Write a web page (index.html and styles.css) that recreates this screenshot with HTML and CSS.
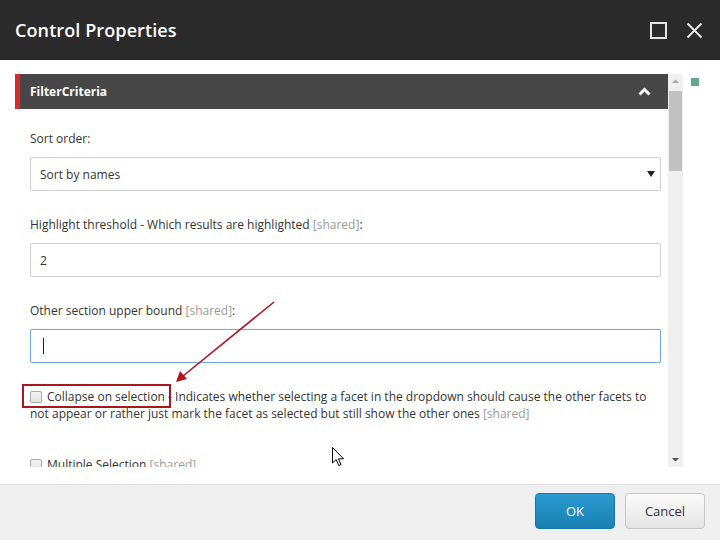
FILE: index.html
```html
<!DOCTYPE html>
<html>
<head>
<meta charset="utf-8">
<link rel="stylesheet" href="styles.css">
</head>
<body>
<div class="dialog">
  <div class="titlebar">
    <div class="title">Control Properties</div>
    <div class="win-actions">
      <svg class="win-icon" width="17" height="17" viewBox="0 0 17 17"><rect x="1" y="1" width="15" height="15" fill="none" stroke="#e6e6e6" stroke-width="2"/></svg>
      <svg class="win-icon" width="17" height="17" viewBox="0 0 17 17"><path d="M1.5 1.5 L15.5 15.5 M15.5 1.5 L1.5 15.5" stroke="#e6e6e6" stroke-width="2" fill="none"/></svg>
    </div>
  </div>
  <div class="body">
    <div class="panel">
      <div class="scroll-content">
        <div class="section-head">
          <span class="section-title">FilterCriteria</span>
          <svg class="chevron" width="13" height="9" viewBox="0 0 13 9"><path d="M1.5 7.5 L6.5 2.5 L11.5 7.5" stroke="#fff" stroke-width="3" fill="none"/></svg>
        </div>
        <div class="section-body">
          <div class="field">
            <div class="label">Sort order:</div>
            <div class="input select">
              <span>Sort by names</span>
              <svg class="caret" width="8" height="6" viewBox="0 0 8 6"><path d="M0 0 H8 L4 6 Z" fill="#222"/></svg>
            </div>
          </div>
          <div class="field">
            <div class="label">Highlight threshold - Which results are highlighted <span class="shared">[shared]</span>:</div>
            <div class="input"><span>2</span></div>
          </div>
          <div class="field">
            <div class="label">Other section upper bound <span class="shared">[shared]</span>:</div>
            <div class="input focused"><span class="text-cursor"></span></div>
          </div>
          <div class="check-row">
            <span class="checkbox"></span>Collapse on selection - Indicates whether selecting a facet in the dropdown should cause the other facets to not appear or rather just mark the facet as selected but still show the other ones <span class="shared">[shared]</span>
            <span class="highlight-box"></span>
          </div>
          <div class="check-row second">
            <span class="checkbox"></span>Multiple Selection <span class="shared">[shared]</span>
          </div>
        </div>
      </div>
      <div class="scrollbar">
        <svg class="sb-arrow" width="15" height="15" viewBox="0 0 15 15"><path d="M4 9 H11 L7.5 5.5 Z" fill="#a8a8a8"/></svg>
        <div class="sb-track"><div class="sb-thumb"></div></div>
        <svg class="sb-arrow" width="15" height="15" viewBox="0 0 15 15"><path d="M4 6 H11 L7.5 9.5 Z" fill="#505050"/></svg>
      </div>
    </div>
    <div class="green-dot"></div>
    <svg class="annot-arrow" width="720" height="424" viewBox="0 60 720 424">
      <line x1="274" y1="302" x2="183" y2="376" stroke="#b2161c" stroke-width="1.6"/>
      <path d="M176 382 L180 371 L187 379 Z" fill="#b2161c"/>
    </svg>
    <svg class="mouse" width="13" height="20" viewBox="0 0 13 20"><path d="M0.5 0.5 V16 L4.2 12.6 L6.8 18.6 L9 17.6 L6.5 11.8 L11.5 11.8 Z" fill="#fff" stroke="#000" stroke-width="1"/></svg>
  </div>
  <div class="footer">
    <button class="btn btn-primary">OK</button>
    <button class="btn btn-default">Cancel</button>
  </div>
</div>
</body>
</html>
```
FILE: styles.css
```css
* { box-sizing: border-box; }
html, body { margin: 0; padding: 0; }
body { width: 720px; height: 540px; overflow: hidden; font-family: "Open Sans", "Noto Sans", sans-serif; color: #333; background: #fff; }
.dialog { width: 720px; height: 540px; display: flex; flex-direction: column; }
.titlebar { height: 60px; background: #2b2b2b; display: flex; align-items: center; justify-content: space-between; padding: 0 17px 0 15px; flex: none; }
.title { color: #fff; font-size: 18px; font-weight: 600; letter-spacing: 0.1px; margin-top: -1px; }
.win-actions { display: flex; gap: 19px; align-items: center; margin-top: 1px; }
.win-icon { display: block; }
.body { flex: 1; position: relative; background: #fff; padding: 14px 37px 0 15px; overflow: hidden; }
.panel { display: flex; height: 393px; }
.scroll-content { flex: 1; overflow: hidden; }
.section-head { height: 35px; background: #474747; border-left: 5px solid #d42b2b; display: flex; align-items: center; justify-content: space-between; padding: 0 17px 0 10px; }
.section-title { color: #fff; font-size: 12px; font-weight: 700; }
.chevron { display: block; margin-top: -1px; }
.section-body { padding: 21px 7px 0 15px; font-size: 12px; }
.field { margin-bottom: 25px; }
.label { line-height: 18px; margin-bottom: 9px; color: #333; }
.shared { color: #999; }
.input { height: 34px; border: 1px solid #cfcfcf; border-radius: 2px; display: flex; align-items: center; padding: 0 9px; color: #333; }
.select { justify-content: space-between; padding-right: 5px; }
.caret { display: block; }
.focused { border-color: #6fa9e0; box-shadow: 0 0 1px rgba(102,175,233,0.5); padding-left: 12px; }
.text-cursor { width: 1px; height: 16px; background: #222; display: block; }
.check-row { position: relative; line-height: 17px; color: #333; }
.check-row .checkbox { display: inline-block; width: 12px; height: 12px; border: 1px solid #a9a9a9; border-radius: 2px; background: linear-gradient(#f4f4f4, #e2e2e2); vertical-align: -2px; margin-right: 5px; }
.highlight-box { position: absolute; left: -8px; top: -4px; width: 149px; height: 24px; border: 2px solid #a8171d; }
.check-row.second { margin-top: 34px; }
.scrollbar { width: 15px; background: #f0f0f0; display: flex; flex-direction: column; }
.sb-arrow { display: block; flex: none; }
.sb-track { flex: 1; padding: 0 1px; }
.sb-thumb { height: 80px; margin-top: 2px; background: #c1c1c1; }
.green-dot { position: absolute; left: 691px; top: 18px; width: 8px; height: 8px; background: #63a88b; }
.annot-arrow { position: absolute; left: 0; top: 0; pointer-events: none; }
.mouse { position: absolute; left: 332px; top: 387px; }
.footer { height: 56px; flex: none; background: #efefef; border-top: 1px solid #dedede; display: flex; justify-content: flex-end; align-items: flex-start; gap: 10px; padding: 8px 15px 0 0; }
.btn { width: 80px; height: 36px; border-radius: 4px; font-family: "Open Sans", "Noto Sans", sans-serif; font-size: 13px; padding: 0; }
.btn-primary { background: linear-gradient(#2a9bd0, #1a80b3); border: 1px solid #1977a6; color: #fff; }
.btn-default { background: linear-gradient(#fbfbfb, #e4e4e4); border: 1px solid #c6c6c6; color: #333; }
```
